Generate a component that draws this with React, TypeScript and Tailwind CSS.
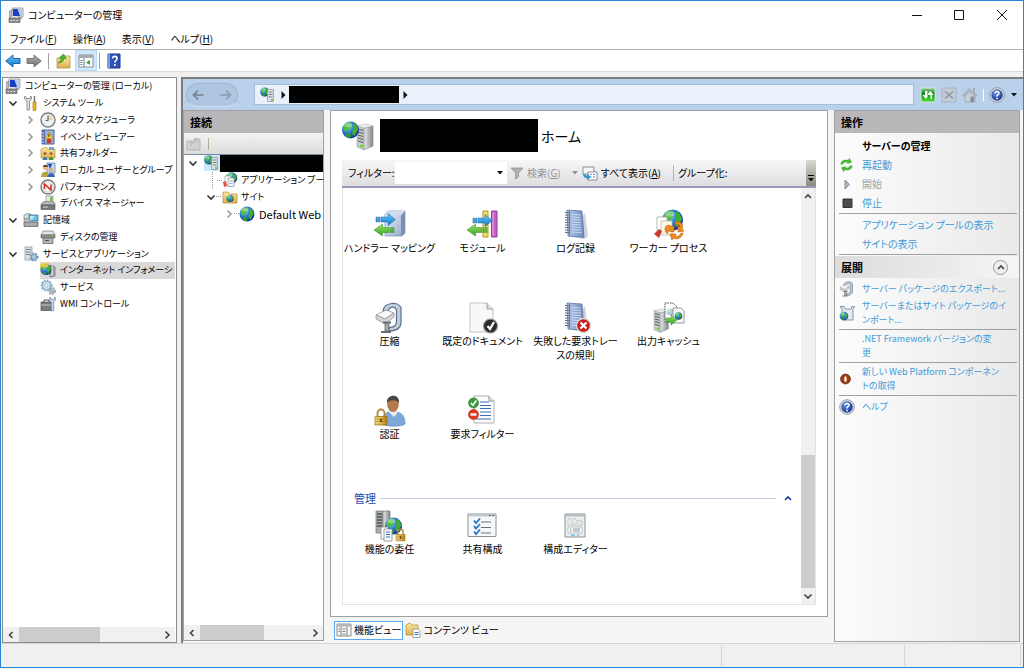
import { ReactNode } from 'react';

/* ---------- drawing primitives ---------- */

const Defs = () => (
  <svg className="absolute h-0 w-0" aria-hidden="true">
    <defs>
      <radialGradient id="sea" cx="35%" cy="30%" r="75%">
        <stop offset="0" stopColor="#9fd4f7" />
        <stop offset="0.45" stopColor="#2f7fd6" />
        <stop offset="1" stopColor="#0b2f86" />
      </radialGradient>
      <linearGradient id="steel" x1="0" x2="1">
        <stop offset="0" stopColor="#e6e9ea" />
        <stop offset="1" stopColor="#85898c" />
      </linearGradient>
      <linearGradient id="book" x1="0" x2="1">
        <stop offset="0" stopColor="#b5c8e6" />
        <stop offset="1" stopColor="#6f8dbf" />
      </linearGradient>
      <linearGradient id="cube" x1="0" x2="1" y2="1">
        <stop offset="0" stopColor="#f2f6fb" />
        <stop offset="1" stopColor="#8fa6c6" />
      </linearGradient>
      <linearGradient id="gold" x1="0" x2="1">
        <stop offset="0" stopColor="#f7dd7c" />
        <stop offset="1" stopColor="#b8841c" />
      </linearGradient>
      <linearGradient id="folder" x1="0" y1="0" x2="0" y2="1">
        <stop offset="0" stopColor="#fbe9a6" />
        <stop offset="1" stopColor="#dcb04e" />
      </linearGradient>
      <linearGradient id="blueArrow" x1="0" y1="0" x2="0" y2="1">
        <stop offset="0" stopColor="#6cc6f4" />
        <stop offset="1" stopColor="#0f78cc" />
      </linearGradient>
      <linearGradient id="greenArrow" x1="0" y1="0" x2="0" y2="1">
        <stop offset="0" stopColor="#9be36b" />
        <stop offset="1" stopColor="#35a322" />
      </linearGradient>
      <linearGradient id="grayArrow" x1="0" y1="0" x2="0" y2="1">
        <stop offset="0" stopColor="#b5b5b5" />
        <stop offset="1" stopColor="#6b6b6b" />
      </linearGradient>
      <linearGradient id="refresh" x1="0" y1="0" x2="0" y2="1">
        <stop offset="0" stopColor="#8ed08a" />
        <stop offset="0.4" stopColor="#128a14" />
        <stop offset="1" stopColor="#4fe03c" />
      </linearGradient>
      <radialGradient id="helpBall" cx="40%" cy="30%" r="70%">
        <stop offset="0" stopColor="#6f95e6" />
        <stop offset="1" stopColor="#16348f" />
      </radialGradient>
    </defs>
  </svg>
);

const Small = ({ children }: { children: ReactNode }) => (
  <svg viewBox="0 0 16 16" className="h-4 w-4 shrink-0" aria-hidden="true">{children}</svg>
);

const Large = ({ children }: { children: ReactNode }) => (
  <svg viewBox="0 0 32 32" className="h-8 w-8 shrink-0" aria-hidden="true">{children}</svg>
);

const Globe = ({ x, y, r }: { x: number; y: number; r: number }) => (
  <g transform={`translate(${x} ${y}) scale(${r / 8})`}>
    <circle r="8" fill="url(#sea)" />
    <path d="M-6.5-3.5C-5-6-2.5-7.3-.5-7.2L1-5.5-.5-4 .5-2.5-2 0-3.5 1.5-5.5.5-6.8-1z" fill="#4fbf3c" />
    <path d="M3-6.5C5.5-5 7-3 7.3-.5L5.5 2 4 5.5 2 4.500 1.500 1.500 3-1 2-3z" fill="#3fae35" />
    <path d="M-4 3.500-1 3 .5 5-.5 7.500C-2.500 7.300-4 6.500-5 5.500z" fill="#2f9a35" />
    <ellipse cx="-2" cy="-4.500" rx="3.500" ry="2" fill="#fff" opacity="0.35" />
  </g>
);

const Tower = ({ x, y, k = 1 }: { x: number; y: number; k?: number }) => (
  <g transform={`translate(${x} ${y}) scale(${k})`}>
    <path d="M0 2 7 4V26L0 23z" fill="#c9cdcf" stroke="#8b8f92" strokeWidth="0.500" />
    <path d="M7 4 16 2V22L7 26z" fill="url(#steel)" stroke="#6e7275" strokeWidth="0.500" />
    <path d="M0 2 9 0 16 2 7 4z" fill="#eceeef" stroke="#999" strokeWidth="0.400" />
    <path d="M1 5 6 6.500M1 8 6 9.500M1 11 6 12.500M1 14 6 15.500M1 17 6 18.500" stroke="#5c6063" strokeWidth="1.200" />
    <circle cx="4.500" cy="22" r="1.500" fill="#64d81e" />
  </g>
);

const Padlock = ({ x, y, k = 1 }: { x: number; y: number; k?: number }) => (
  <g transform={`translate(${x} ${y}) scale(${k})`}>
    <path d="M2.500 8V4.500a3.500 3.500 0 0 1 7 0V8" fill="none" stroke="#b08a38" strokeWidth="1.800" />
    <path d="M0 8H12V16.500H0z" fill="url(#gold)" stroke="#946a12" strokeWidth="0.700" />
    <path d="M1 10.500H11M1 13H11" stroke="#a3761c" strokeWidth="0.600" />
    <path d="M6 10.500v3" stroke="#4c3606" strokeWidth="1.500" />
  </g>
);

const Computer = () => (
  <Small>
    <path d="M1.500 4 4 3V11H1.500z" fill="#bfc4c8" stroke="#777" strokeWidth="0.600" />
    <path d="M4 1H15V10H4z" fill="#dfe6ee" stroke="#7b858f" strokeWidth="0.700" />
    <path d="M5 2H14V9H5z" fill="#b9cdea" />
    <path d="M5 2H9.500L12 9H5z" fill="#1b3fc0" />
    <path d="M11 10H14V12H11z" fill="#aaa" />
    <path d="M1 11H12V15.500H1z" fill="#8a8e91" stroke="#555" strokeWidth="0.600" />
    <path d="M4 11V9.500H8.500V11M2.500 13.500h1.500M5.500 13.500h1.500M8.500 13.500h1.500" stroke="#e8e8e8" fill="none" />
  </Small>
);

const Tools = () => (
  <Small>
    <path d="M2 1 1.500 4 4 6V14a1.300 1.300 0 0 0 2.600 0V6L8.500 4 8 1 6.800 3.500H3.500z" fill="#e4e4e4" stroke="#777" strokeWidth="0.800" />
    <path d="M11.500 1V7" stroke="#777" strokeWidth="1.500" />
    <path d="M10 7H13V14.500a1.500 1.500 0 0 1-3 0z" fill="#f2b41b" stroke="#b67a0a" strokeWidth="0.700" />
  </Small>
);

const Clock = () => (
  <Small>
    <circle cx="8" cy="8" r="7" fill="#eef1f2" stroke="#7b7f82" strokeWidth="1.400" />
    <path d="M8 3A5 5 0 0 1 13 8H8z" fill="#f2d9a0" />
    <path d="M8 3.500V8.500H5.500" stroke="#3e6ea3" strokeWidth="1.200" fill="none" />
  </Small>
);

const EventLog = () => (
  <Small>
    <path d="M2 1H14V15H2z" fill="#9db4d8" stroke="#42639c" />
    <path d="M2 1H5V15H2z" fill="#4f6fa8" />
    <path d="M1 4H4M1 7H4M1 10H4M1 13H4" stroke="#dfe6f2" />
    <path d="M9 3 13 9.500H5.500z" fill="#fbd62f" stroke="#a37a00" strokeWidth="0.500" />
    <path d="M9 5V8" stroke="#222" />
    <circle cx="9" cy="12" r="2.500" fill="#d33a2f" />
  </Small>
);

const SharedFolder = () => (
  <Small>
    <path d="M1 4 6 2 8 4H15V13H1z" fill="url(#folder)" stroke="#b28a2d" strokeWidth="0.600" />
    <path d="M9 2H14V5H9z" fill="#74a7dc" />
    <circle cx="5" cy="8.500" r="1.600" fill="#a36b3a" />
    <circle cx="11" cy="8.500" r="1.600" fill="#a36b3a" />
    <path d="M2.500 15C2.500 11 7.500 11 7.500 15z" fill="#3f75b5" />
    <path d="M8.500 15C8.500 11 13.500 11 13.500 15z" fill="#4a8c44" />
  </Small>
);

const Users = () => (
  <Small>
    <path d="M7 1H15V11H7z" fill="#c5d8ee" stroke="#6685a8" strokeWidth="0.800" />
    <path d="M8 2H12L10 7z" fill="#1742b0" />
    <circle cx="5.500" cy="5.500" r="2.600" fill="#e5b98b" />
    <path d="M2.900 5C3 2 8 2 8 5z" fill="#6b4a2a" />
    <circle cx="11" cy="8" r="2" fill="#d9a878" />
    <path d="M1 15C1 8 9 8 9 15z" fill="#b7a43c" />
    <path d="M7.500 15C7.500 9.500 15 9.500 15 15z" fill="#3c67b1" />
  </Small>
);

const Gauge = () => (
  <Small>
    <circle cx="8" cy="8" r="7" fill="#fff" stroke="#7a7a7a" strokeWidth="1.400" />
    <circle cx="8" cy="8" r="5.300" fill="#f7f1f1" stroke="#bbb" strokeWidth="0.600" />
    <path d="M4.500 10V5L11 11V5.500" stroke="#d5261c" strokeWidth="1.500" fill="none" />
  </Small>
);

const Device = () => (
  <Small>
    <path d="M6 1H13V8H6z" fill="#e5e9ec" stroke="#8b9093" strokeWidth="0.700" />
    <path d="M10 2H12.500V6H10z" fill="#68c33d" />
    <path d="M2 8 4 6.500H13L15 8V10H1z" fill="#b6babd" stroke="#6a6e71" strokeWidth="0.600" />
    <path d="M1 10H15V14.500H1z" fill="#74787b" stroke="#4e5255" strokeWidth="0.600" />
    <path d="M3 12H8" stroke="#d7dadc" />
  </Small>
);

const Storage = () => (
  <Small>
    <path d="M1 3Q4 .5 8 2V7H1z" fill="#d6d9db" stroke="#7d8183" strokeWidth="0.700" />
    <path d="M6 3H15V9H6z" fill="#65bfe6" stroke="#4a7792" strokeWidth="0.800" />
    <path d="M7 4H12L9 8H7z" fill="#b8e6f8" />
    <path d="M1 10H15V14.500H1z" fill="#a7abae" stroke="#55595c" strokeWidth="0.700" />
    <path d="M1 7H7V10H1z" fill="#bfc3c5" stroke="#777" strokeWidth="0.500" />
    <circle cx="12.500" cy="12.300" r="1" fill="#65d62a" />
  </Small>
);

const Disk = () => (
  <Small>
    <path d="M3 2H13L15 6H1z" fill="#e1e4e5" stroke="#777" strokeWidth="0.700" />
    <path d="M1 6H15V9H1z" fill="#909497" stroke="#55595c" strokeWidth="0.600" />
    <path d="M3 9H13V14.500H3z" fill="#b5b9bb" stroke="#55595c" strokeWidth="0.700" />
    <path d="M5 11.500H9" stroke="#555" strokeWidth="1.200" />
    <circle cx="12.500" cy="7.500" r="1" fill="#65d62a" />
  </Small>
);

const Cog = ({ x, y, r, fill }: { x: number; y: number; r: number; fill: string }) => (
  <g>
    <circle cx={x} cy={y} r={r} fill="none" stroke={fill} strokeWidth="2" strokeDasharray="1.700 1.200" />
    <circle cx={x} cy={y} r={r - 1} fill="#dcebf5" stroke={fill} strokeWidth="1.200" />
    <circle cx={x} cy={y} r={r / 3} fill="#fff" stroke={fill} strokeWidth="0.800" />
  </g>
);

const ServerCog = () => (
  <Small>
    <path d="M2 1H9V14H2z" fill="#dde1e4" stroke="#8b9093" strokeWidth="0.700" />
    <path d="M3 3.500H8M3 6H8M3 8.500H7" stroke="#7b8084" />
    <Cog x={11} y={11} r={3.500} fill="#7199bd" />
  </Small>
);

const Services = () => (
  <Small>
    <Cog x={6.500} y={6.500} r={5} fill="#82adc9" />
    <Cog x={12} y={12} r={3} fill="#94a5b1" />
  </Small>
);

const IisNode = () => (
  <Small>
    <path d="M10 3 15 5V14L10 15z" fill="#a7abad" stroke="#66696c" strokeWidth="0.700" />
    <path d="M12 4V14" stroke="#eee" />
    <Globe x={6} y={7.500} r={5.500} />
    <path d="M0 3C2 0 5 2 9 .5L8 5C5 6 3 4 0 6z" fill="#f2c92f" opacity="0.850" />
  </Small>
);

const Wmi = () => (
  <Small>
    <path d="M4 6V4H9V6" stroke="#555" fill="none" />
    <path d="M1 6H12V14.500H1z" fill="#777c80" stroke="#4b4f52" strokeWidth="0.700" />
    <path d="M1 9H12" stroke="#c5c8ca" />
    <path d="M10 1 9.500 4 11.300 6V14a1.200 1.200 0 0 0 2.400 0V6L15.500 4 15 1 13.500 3.500H11.500z" fill="#c9def1" stroke="#5c7da1" strokeWidth="0.700" />
  </Small>
);

const GlobeServer = () => (
  <Small>
    <Globe x={4.800} y={5} r={4.600} />
    <path d="M7.500 2.500H13.500V14.500H7.500z" fill="#dfe3e6" stroke="#8b9093" strokeWidth="0.700" />
    <path d="M8.500 5H12.500M8.500 7.500H12.500M8.500 10H12.500" stroke="#7b8084" />
    <circle cx="12" cy="13" r="1" fill="#4fc41f" />
  </Small>
);

const AppPools = () => (
  <Small>
    <Globe x={9.500} y={6} r={5.800} />
    <path d="M3 4H9V13H3z" fill="#fff" stroke="#999" strokeWidth="0.700" />
    <path d="M6 6H12V14.500H6z" fill="#f1f5f8" stroke="#8b8f92" strokeWidth="0.700" />
    <path d="M1 10 4 9 5 14 2 15z" fill="#d9534a" />
    <path d="M7.500 9H10.500M7.500 11.500H10.500" stroke="#9cb3cc" />
  </Small>
);

const SitesFolder = () => (
  <Small>
    <path d="M1 3H6L8 5H15V14H1z" fill="url(#folder)" stroke="#b28a2d" strokeWidth="0.700" />
    <Globe x={8} y={9.500} r={3.600} />
  </Small>
);

const Site = () => <Small><Globe x={8} y={8} r={7.500} /></Small>;

const HelpBall = () => (
  <Small>
    <circle cx="8" cy="8" r="7.300" fill="#dcdfe4" stroke="#868b96" strokeWidth="0.800" />
    <circle cx="8" cy="8" r="5.700" fill="url(#helpBall)" />
    <path d="M6 6.300C6 3.800 10.200 3.900 10 6.300 9.900 7.700 8 7.700 8 9.400" fill="none" stroke="#fff" strokeWidth="1.500" />
    <circle cx="8" cy="11.500" r="0.900" fill="#fff" />
  </Small>
);

const Chevron = ({ dir, color = '#444' }: { dir: 'up' | 'down' | 'left' | 'right'; color?: string }) => {
  const d = {
    up: 'M2 7 5 4 8 7',
    down: 'M1.500 3.500 5 7 8.500 3.500',
    left: 'M6.500 2 3.500 5 6.500 8',
    right: 'M3.500 1.500 7 5 3.500 8.500',
  }[dir];
  return (
    <svg viewBox="0 0 10 10" className="h-[10px] w-[10px] shrink-0" aria-hidden="true">
      <path d={d} fill="none" stroke={color} strokeWidth="1.600" />
    </svg>
  );
};

const Caret = ({ color = '#111' }: { color?: string }) => (
  <svg viewBox="0 0 6 4" className="h-1 w-[6px] shrink-0" aria-hidden="true"><path d="M0 0H6L3 3.500z" fill={color} /></svg>
);

const RightCaret = () => (
  <svg viewBox="0 0 5 8" className="h-2 w-[5px] shrink-0" aria-hidden="true"><path d="M.5 0 4.500 4 .5 8z" fill="#111" /></svg>
);

/* ---------- large feature icons ---------- */

const BlueArrow = () => (
  <path d="M2 8H3.500V13H2zM4.500 8H6V13H4.500zM7 8H14V4.500L21.500 10.500 14 16.500V13H7z" fill="url(#blueArrow)" stroke="#1b69ad" strokeWidth="0.500" />
);

const GreenArrow = () => (
  <path d="M20 18.500H18.500V23.500H20zM17.500 18.500H16V23.500H17.500zM15 18.500H8.500V15L0 21 8.500 27V23.500H15z" fill="url(#greenArrow)" stroke="#2f8a20" strokeWidth="0.500" />
);

const HandlerIcon = () => (
  <Large>
    <path d="M11 5 14 2H31V24L28 27H11z" fill="url(#cube)" stroke="#7c93b4" strokeWidth="0.700" />
    <path d="M27 6 31 2V24L27 27z" fill="#7890b5" />
    <path d="M11 5 14 2H31L27 6H11z" fill="#cfdced" />
    <BlueArrow />
    <GreenArrow />
  </Large>
);

const ModuleIcon = () => (
  <Large>
    <path d="M16 2H21V28H16z" fill="#f7e06a" stroke="#b39226" />
    <path d="M24.500 2H30V28H24.500z" fill="#c45fc4" stroke="#8d3a92" />
    <path d="M26 3V27" stroke="#eab0ea" />
    <g transform="translate(4 1)"><BlueArrow /></g>
    <GreenArrow />
  </Large>
);

const Notebook = () => (
  <g>
    <path d="M8 27 25 30 28 27 25 4z" fill="#cfd3da" />
    <path d="M7 1 22 2 24 28.500 8 27z" fill="url(#book)" stroke="#4d6a9e" strokeWidth="0.700" />
    <path d="M9.500 2V26.500" stroke="#5876aa" />
    <path d="M12 5.500 20.500 6M12 8 20.500 8.500M12 10.500 20.800 11M12 13 21 13.500M12 15.500 21 16M12 18 21.300 18.500M12 20.500 21.500 21M12 23 21.700 23.500" stroke="#dbe6f6" strokeWidth="0.800" />
    <path d="M5 3.500H9M5 6H9M5 8.500H9M5 11H9M5 13.500H9M5 16H9M5 18.500H9M5 21H9M5 23.500H9" stroke="#5d6f8d" strokeWidth="1" />
  </g>
);

const LogIcon = () => <Large><Notebook /></Large>;

const FailedTraceIcon = () => (
  <Large>
    <Notebook />
    <circle cx="23.500" cy="23.500" r="7" fill="#c81e1e" stroke="#ddd" strokeWidth="1.300" />
    <path d="M20.500 20.500 26.500 26.500M26.500 20.500 20.500 26.500" stroke="#fff" strokeWidth="2.300" />
  </Large>
);

const WorkerIcon = () => (
  <Large>
    <Globe x={19.500} y={11} r={10.500} />
    <path d="M4 8H14V22H4z" fill="#fff" stroke="#aaa" strokeWidth="0.800" />
    <path d="M8 12H19V26H8z" fill="#fdf6e4" stroke="#bba" strokeWidth="0.800" />
    <path d="M1 25 6 20 9 22 6 29z" fill="#cd3a32" />
    <path d="M12 20C12 16 17 15 19 18L21 16 21 23 15 22 17 20C15 19 14 21 15 25 13 24 12 22 12 20z" fill="#f28a1d" stroke="#b75c08" strokeWidth="0.600" />
    <path d="M23 13C28 12 31 16 29 20L31 22 25 23 25 17 27 18C27 16 25 15 22 16z" fill="#f28a1d" stroke="#b75c08" strokeWidth="0.600" />
    <path d="M30 24C29 29 24 31 20 29L19 31 17 25 23 25 22 27C24 28 27 27 28 24z" fill="#f28a1d" stroke="#b75c08" strokeWidth="0.600" />
  </Large>
);

const ClampShape = () => (
  <g>
    <path d="M9 9C10 0 25-1 27 6V20C27 27 22 29 15 29V25.500C20 25.500 22.500 24 22.500 19V9C22 4 16 3.500 14 9z" fill="#c3cedb" stroke="#5a6f8d" strokeWidth="1.200" />
    <path d="M2 13 12 8 20 11 11 17z" fill="#fafafa" stroke="#888" strokeWidth="0.700" />
    <path d="M2 13V17L11 22 20 15V11L11 17z" fill="#d5d8da" stroke="#888" strokeWidth="0.700" />
    <path d="M11 21H15V29H11z" fill="#a3a9b0" stroke="#555" strokeWidth="0.700" />
    <path d="M7 30H17M9 20.500H17" stroke="#666d75" strokeWidth="1.800" />
  </g>
);

const CompressIcon = () => <Large><ClampShape /></Large>;

const DefaultDocIcon = () => (
  <Large>
    <path d="M3 1H20L26 7V30H3z" fill="#f8f8f8" stroke="#c0c3c5" />
    <path d="M20 1V7H26" fill="#e0e2e3" stroke="#9b9ea0" />
    <circle cx="23.500" cy="24" r="7" fill="#2a2a2a" stroke="#999" strokeWidth="1.200" />
    <path d="M20.500 24 23 27 27 20" fill="none" stroke="#fff" strokeWidth="2.200" />
  </Large>
);

const CacheIcon = () => (
  <Large>
    <Tower x={1} y={7} k={0.900} />
    <path d="M12 1H20L24 5V20H12z" fill="#fff" stroke="#333" strokeDasharray="1.500 1" strokeWidth="0.900" />
    <g opacity="0.400"><Globe x={17} y={10} r={3.300} /></g>
    <path d="M20 6H28L31 9V21H20z" fill="#f7fafc" stroke="#8b8f92" strokeWidth="0.900" />
    <Globe x={25.500} y={14} r={3.800} />
    <path d="M13 16H18V13L24 18 18 23V20H13z" fill="url(#greenArrow)" stroke="#2f8a20" strokeWidth="0.500" />
  </Large>
);

const AuthIcon = () => (
  <Large>
    <path d="M8 29C8 18 13 17 19 16 26 17 31 19 31 29 27 32 13 32 8 29z" fill="#7da9da" stroke="#5482b7" strokeWidth="0.600" />
    <path d="M15 17 20 22 24 17 22 14H16z" fill="#e9eef4" />
    <ellipse cx="19" cy="9.500" rx="5.800" ry="7.500" fill="#b07a4a" />
    <path d="M13 8C12-1 26-2 25 8 23 5 17 4 13 8z" fill="#4b4643" />
    <Padlock x={1} y={13.500} />
  </Large>
);

const RequestFilterIcon = () => (
  <Large>
    <path d="M7 1H22L27 6V28H7z" fill="#fbfbfb" stroke="#aeb1b3" />
    <path d="M22 1V6H27" fill="#e1e3e4" stroke="#999" />
    <path d="M13 7H22M13 10.500H24M13 13.500H24M13 17H24M13 20.500H24M9 24H24" stroke="#3c6fb9" strokeWidth="1.200" />
    <circle cx="6.500" cy="8" r="5" fill="#3b9c3e" stroke="#26712b" strokeWidth="0.600" />
    <path d="M4 8 6 10.200 9.300 5.500" stroke="#fff" strokeWidth="1.600" fill="none" />
    <circle cx="6.500" cy="19.500" r="5" fill="#de3a1e" stroke="#a7220d" strokeWidth="0.600" />
    <path d="M3.500 19.500H9.500" stroke="#fff" strokeWidth="2.400" />
  </Large>
);

const DelegationIcon = () => (
  <Large>
    <path d="M2 1H9V23H2z" fill="#a9adb0" stroke="#6e7275" strokeWidth="0.700" />
    <path d="M9 1H16V21L9 23z" fill="url(#steel)" stroke="#6e7275" strokeWidth="0.700" />
    <path d="M3 4H8M3 7H8M3 10H8M3 13H8M3 16H8" stroke="#4f5356" strokeWidth="1.300" />
    <Globe x={19.500} y={16} r={8.500} />
    <path d="M7 17H14V29H7z" fill="#fff" stroke="#888" strokeWidth="0.800" />
    <path d="M10 19H18V31H10z" fill="#f7fafc" stroke="#888" strokeWidth="0.800" />
    <path d="M12 22H16M12 24.500H16M12 27H16" stroke="#3c6fb9" />
    <Padlock x={22} y={18.500} k={0.750} />
  </Large>
);

const SharedConfigIcon = () => (
  <Large>
    <path d="M1 4H29V26.500H1z" fill="#f6f8f9" stroke="#8b9196" />
    <path d="M1.500 4.500H28.500V6.500H1.500z" fill="#c3c9cd" />
    <path d="M22 5.500H23.500M25.500 5.500H27" stroke="#444" />
    <path d="M7 10.500 9 13 13 8.500M7 16 9 18.500 13 14M7 21.500 9 24 13 19.500" stroke="#2477c4" strokeWidth="1.800" fill="none" />
    <path d="M14 12H24M14 17.500H24M14 23H24" stroke="#6b7176" strokeWidth="1.200" />
  </Large>
);

const ConfigEditorIcon = () => (
  <Large>
    <path d="M5 4H25V27H5z" fill="#eceff0" stroke="#8b9196" />
    <path d="M5.500 4.500H24.500V6.500H5.500z" fill="#b6bcc0" />
    <path d="M8 9H16V11H22V15H8zM8 17H22V23H8z" fill="#f8f9f9" stroke="#a9afb3" strokeWidth="0.700" />
    <path d="M10 13H20M10 11H14" stroke="#b4babe" strokeWidth="0.800" />
    <path d="M10 19H11.500M13 19H20M10 21H11.500M13 21H20" stroke="#6c8094" strokeWidth="0.800" />
    <path d="M11 25.200H15M17 25.200H19" stroke="#56b8e8" strokeWidth="1.300" />
  </Large>
);

/* ---------- data ---------- */

type Node = { level: number; label: string; icon: ReactNode; open?: boolean; selected?: boolean };

const managementTree: Node[] = [
  { level: 0, label: 'コンピューターの管理 (ローカル)', icon: <Computer /> },
  { level: 1, label: 'システム ツール', icon: <Tools />, open: true },
  { level: 2, label: 'タスク スケジューラ', icon: <Clock />, open: false },
  { level: 2, label: 'イベント ビューアー', icon: <EventLog />, open: false },
  { level: 2, label: '共有フォルダー', icon: <SharedFolder />, open: false },
  { level: 2, label: 'ローカル ユーザーとグループ', icon: <Users />, open: false },
  { level: 2, label: 'パフォーマンス', icon: <Gauge />, open: false },
  { level: 2, label: 'デバイス マネージャー', icon: <Device /> },
  { level: 1, label: '記憶域', icon: <Storage />, open: true },
  { level: 2, label: 'ディスクの管理', icon: <Disk /> },
  { level: 1, label: 'サービスとアプリケーション', icon: <ServerCog />, open: true },
  { level: 2, label: 'インターネット インフォメーシ', icon: <IisNode />, selected: true },
  { level: 2, label: 'サービス', icon: <Services /> },
  { level: 2, label: 'WMI コントロール', icon: <Wmi /> },
];

const features = [
  { label: 'ハンドラー マッピング', icon: <HandlerIcon /> },
  { label: 'モジュール', icon: <ModuleIcon /> },
  { label: 'ログ記録', icon: <LogIcon /> },
  { label: 'ワーカー プロセス', icon: <WorkerIcon /> },
  { label: '圧縮', icon: <CompressIcon /> },
  { label: '既定のドキュメント', icon: <DefaultDocIcon /> },
  { label: '失敗した要求トレー\nスの規則', icon: <FailedTraceIcon /> },
  { label: '出力キャッシュ', icon: <CacheIcon /> },
  { label: '認証', icon: <AuthIcon /> },
  { label: '要求フィルター', icon: <RequestFilterIcon /> },
];

const managementFeatures = [
  { label: '機能の委任', icon: <DelegationIcon /> },
  { label: '共有構成', icon: <SharedConfigIcon /> },
  { label: '構成エディター', icon: <ConfigEditorIcon /> },
];

const menus = [
  ['ファイル', 'F'],
  ['操作', 'A'],
  ['表示', 'V'],
  ['ヘルプ', 'H'],
];

/* ---------- pieces ---------- */

const Key = ({ k }: { k: string }) => <>(<span className="underline">{k}</span>)</>;

const indent = ['pl-0', 'pl-0', 'pl-[17px]'];

const TreeRow = ({ level, label, icon, open, selected }: Node) => (
  <li className={`flex min-h-0 flex-1 items-center ${indent[level]}`}>
    {level > 0 && (
      <span className="flex w-[18px] shrink-0 pl-[3px]">
        {open !== undefined && <Chevron dir={open ? 'down' : 'right'} color={open ? '#333' : '#999'} />}
      </span>
    )}
    <span className={`flex h-full items-center gap-1 ${selected ? 'flex-1 bg-[#d9d9d9]' : ''}`}>
      {icon}
      <span>{label}</span>
    </span>
  </li>
);

const HScroll = ({ thumb }: { thumb: string }) => (
  <div className="flex h-[15px] shrink-0 items-stretch bg-[#f0f0f0]">
    <button aria-label="左へスクロール" className="flex w-4 items-center justify-center"><Chevron dir="left" /></button>
    <div className="flex-1"><div className={`h-full bg-[#cdcdcd] ${thumb}`} /></div>
    <button aria-label="右へスクロール" className="flex w-4 items-center justify-center"><Chevron dir="right" /></button>
  </div>
);

const PaneTitle = ({ children }: { children: ReactNode }) => (
  <h2 className="flex h-[22px] shrink-0 items-center bg-[#bab7ba] px-[6px] text-[11px] font-bold">{children}</h2>
);

const FeatureGrid = ({ items }: { items: { label: string; icon: ReactNode }[] }) => (
  <ul className="grid auto-rows-[93px] grid-cols-[repeat(auto-fill,93px)]">
    {items.map(f => (
      <li key={f.label}>
        <button className="flex w-full flex-col items-center">
          {f.icon}
          <span className="whitespace-pre text-center leading-[14px]">{f.label}</span>
        </button>
      </li>
    ))}
  </ul>
);

const Action = ({ icon, label, tall }: { icon?: ReactNode; label: string; tall?: boolean }) => (
  <li className={`flex items-center ${tall ? 'h-[30px]' : 'h-[19px]'}`}>
    <span className="flex w-[27px] shrink-0 items-center pl-1">{icon}</span>
    <a href="#" className="whitespace-pre leading-[14px] text-[#3d9bd8]">{label}</a>
  </li>
);

const Rule = () => <li className="mr-[2px] ml-1 my-[1px] h-[1px] bg-[#a0a0a0]" />;

const App = () => {
  return (
    <div className="flex min-h-screen flex-col border border-[#2a85d4] bg-white font-['Noto_Sans_CJK_JP',sans-serif] text-[10px] leading-[16px] text-black [font-feature-settings:'palt']">
      <Defs />

      {/* Title bar */}
      <header className="flex h-[27px] items-center pl-[7px]">
        <Computer />
        <h1 className="flex-1 pl-1">コンピューターの管理</h1>
        <button aria-label="最小化" className="flex w-[42px] justify-center">
          <svg viewBox="0 0 10 10" className="h-[10px] w-[10px]"><path d="M0 5.500H10" stroke="#111" /></svg>
        </button>
        <button aria-label="最大化" className="flex w-[42px] justify-center">
          <svg viewBox="0 0 10 10" className="h-[10px] w-[10px]"><path d="M.5.5H9.500V9.500H.5z" fill="none" stroke="#111" /></svg>
        </button>
        <button aria-label="閉じる" className="flex w-[43px] justify-center">
          <svg viewBox="0 0 10 10" className="h-[10px] w-[10px]"><path d="M0 0 10 10M10 0 0 10" stroke="#111" /></svg>
        </button>
      </header>

      {/* Menu bar */}
      <nav className="flex h-[22px] items-center gap-4 border-b border-[#b4b4b4] pl-[9px]">
        {menus.map(([label, k]) => (
          <button key={k}>{label}<Key k={k} /></button>
        ))}
      </nav>

      {/* Toolbar */}
      <div className="flex h-[21px] items-center pl-1">
        <button aria-label="戻る" className="mr-[5px]">
          <Small><path d="M8 2V5.500H15V10.500H8V14L.8 8z" fill="url(#blueArrow)" stroke="#1b69ad" /></Small>
        </button>
        <button aria-label="進む">
          <Small><path d="M8 2V5.500H1V10.500H8V14L15.200 8z" fill="url(#grayArrow)" stroke="#777" /></Small>
        </button>
        <span className="mx-[6px] h-4 w-[1px] bg-[#a0a0a0]" />
        <button aria-label="上へ" className="mr-1">
          <Small>
            <path d="M2 5H8L9 3H15V15H2z" fill="url(#folder)" stroke="#b28a2d" strokeWidth="0.700" />
            <path d="M3 10C4 9 6 8 6.500 5.500L4 5 8.500 1 11.500 5.500 9 5.500C8.500 8.500 6 10 3 10z" fill="#49b82e" stroke="#2b7d18" strokeWidth="0.500" />
          </Small>
        </button>
        <button aria-label="コンソール ツリーの表示" className="flex h-[21px] w-[22px] items-center justify-center border border-[#b5dcf8] bg-[#cfe8fb]">
          <Small>
            <path d="M1 2H15V14H1z" fill="#fff" stroke="#8a8f94" />
            <path d="M1 2H15V5H1z" fill="#a5abb1" />
            <path d="M6 5V14M2.500 7.500H4.500M2.500 9.500H4.500M2.500 11.500H4.500" stroke="#6c7c8c" />
            <path d="M12 7V12L8 9.500z" fill="#38a52c" />
          </Small>
        </button>
        <span className="mx-[2px] h-4 w-[1px] bg-[#a0a0a0]" />
        <button aria-label="ヘルプ" className="ml-1">
          <Small>
            <path d="M2 1H14V15H2z" fill="#2e55b5" stroke="#1b3787" />
            <path d="M2 1H4V15H2z" fill="#7c9be0" />
            <path d="M6.500 5.500C6.500 2.600 11 2.800 11 5.500 11 7.500 8.800 7.500 8.800 9.500M8.800 11V13" stroke="#fff" strokeWidth="1.600" fill="none" />
          </Small>
        </button>
      </div>
      <div className="h-[6px] border-t border-[#d9d9d9] bg-[#f0f0f0]" />

      <main className="flex min-h-0 flex-1 gap-1 bg-[#f0f0f0] pl-[1px]">
        {/* Console tree */}
        <aside className="flex w-[175px] shrink-0 flex-col border border-[#8c8c8c] bg-white pr-[1px]">
          <ul className="flex h-[234px] flex-col pl-[2px] text-[9px] whitespace-nowrap">
            {managementTree.map(n => <TreeRow key={n.label} {...n} />)}
          </ul>
          <div className="flex-1" />
          <HScroll thumb="w-[58%]" />
        </aside>

        {/* IIS manager */}
        <section className="flex min-w-0 flex-1 flex-col border-t-2 border-l-2 border-[#7d7d7d] bg-[#f5f5f5]">
          <div className="flex h-[31px] shrink-0 items-center bg-[#b9d1ea] pr-[6px] pl-[3px]">
            <div className="flex h-6 w-[52px] items-center justify-between rounded-full border border-[#9db5d1] border-b-[#cfdff0] bg-[#aec6e1] px-[5px]">
              <button aria-label="前のページ">
                <svg viewBox="0 0 12 12" className="h-3 w-3"><path d="M11.500 6H1.500M6 1.500 1.500 6 6 10.500" stroke="#76828f" strokeWidth="1.700" fill="none" /></svg>
              </button>
              <button aria-label="次のページ">
                <svg viewBox="0 0 12 12" className="h-3 w-3"><path d="M.5 6H10.500M6 1.500 10.500 6 6 10.500" stroke="#8b9bad" strokeWidth="1.700" fill="none" /></svg>
              </button>
            </div>
            <div className="ml-4 flex h-[21px] flex-1 items-center border border-[#a5bfdb] bg-[#e9f1fa] pl-[5px]">
              <GlobeServer />
              <span className="pr-[3px] pl-[5px]"><RightCaret /></span>
              <div className="h-[17px] w-[110px] bg-black" />
              <span className="pl-1"><RightCaret /></span>
            </div>
            <div className="flex items-center gap-[5px] pl-[6px]">
              <button aria-label="更新">
                <Small>
                  <path d="M1 1H15V15H1z" fill="url(#refresh)" stroke="#d5e3d5" />
                  <path d="M5 4V8H2.500L6 12 7.500 10V4zM10.500 12V8H8V6.500L10.500 4 13.500 8H12V12z" fill="#fff" />
                </Small>
              </button>
              <button aria-label="中止">
                <Small>
                  <path d="M1 1H15V15H1z" fill="#c3cdd8" stroke="#a9b3be" />
                  <path d="M4 4.500 12 11.500M12 4.500 4 11.500" stroke="#8c97a3" strokeWidth="1.500" />
                </Small>
              </button>
              <button aria-label="ホーム">
                <Small>
                  <path d="M3 8 8 4 13 8V15H3z" fill="#c7ced6" stroke="#98a1ab" strokeWidth="0.800" />
                  <path d="M11 1H13V6H11z" fill="#a3abb4" />
                  <path d="M.5 8.500 7 1.500 15 8.500 13 9.500 7.500 4.500 2 9.500z" fill="#b3bbc4" stroke="#949da6" strokeWidth="0.600" />
                  <path d="M8.500 9.500H12V15H8.500z" fill="#848d97" />
                </Small>
              </button>
              <span className="h-3 w-[1px] bg-white" />
              <button aria-label="ヘルプ メニュー" className="flex items-center gap-[6px]">
                <HelpBall />
                <Caret />
              </button>
            </div>
          </div>

          <div className="flex min-h-0 flex-1 gap-[6px] pr-[3px]">
            {/* Connections */}
            <div className="mb-[2px] flex w-[141px] shrink-0 flex-col border border-[#a0a0a0] bg-white">
              <PaneTitle>接続</PaneTitle>
              <div className="flex h-[22px] items-center border-b border-[#7a8a9c] bg-linear-to-b from-[#f3f3f3] to-[#dcdcdc] pl-[2px]">
                <button aria-label="接続先" disabled>
                  <Small><path d="M1 5H6L4 8 9 3H14V14H1zM4 10 11 3M7.500 3H11V6.500" fill="#d2d2d2" stroke="#b5b5b5" /></Small>
                </button>
                <span className="ml-[6px] h-3 w-[1px] bg-[#b5b09a]" />
              </div>
              <ul className="flex h-[67px] flex-col text-[9px] whitespace-nowrap">
                <li className="flex flex-1 items-center pl-1">
                  <Chevron dir="down" color="#333" />
                  <span className="w-[6px] shrink-0" />
                  <span className="bg-[#cce8ff]"><GlobeServer /></span>
                  <span className="h-full flex-1 bg-black" />
                </li>
                <li className="flex flex-1 items-center pl-[28px]">
                  <span className="h-full w-[5px] shrink-0 border-l border-dotted border-[#999]" />
                  <span className="w-[5px] shrink-0 border-t border-dotted border-[#999]" />
                  <AppPools />
                  <span className="pl-[3px]">アプリケーション プー</span>
                </li>
                <li className="flex flex-1 items-center pl-[22px]">
                  <Chevron dir="down" color="#333" />
                  <span className="mr-[1px] w-[5px] border-t border-dotted border-[#999]" />
                  <SitesFolder />
                  <span className="pl-[3px]">サイト</span>
                </li>
                <li className="flex flex-1 items-center pl-10">
                  <Chevron dir="right" color="#999" />
                  <span className="w-[5px] shrink-0 border-t border-dotted border-[#999]" />
                  <Site />
                  <span className="pl-1 text-[11px]">Default Web</span>
                </li>
              </ul>
              <div className="flex-1" />
              <HScroll thumb="w-[60%]" />
            </div>

            {/* Feature view */}
            <div className="flex min-w-0 flex-1 flex-col">
              <div className="flex flex-1 flex-col border border-[#a0a0a0] bg-white pr-[11px] pb-[11px] pl-[11px]">
                <div className="flex h-[49px] items-center">
                  <Large>
                    <Tower x={15} y={4} />
                    <Globe x={8.500} y={10} r={8.500} />
                  </Large>
                  <div className="ml-[6px] h-[33px] w-[158px] bg-black" />
                  <h2 className="pl-[3px] text-[14px]">ホーム</h2>
                </div>
                <div className="flex h-7 shrink-0 items-center border-b-2 border-[#9a98b2] bg-linear-to-b from-[#f7f7f8] to-[#dedde0] pl-[6px] whitespace-nowrap">
                  <label htmlFor="filter" className="w-[47px]">フィルター:</label>
                  <div className="flex h-[22px] w-[112px] items-center bg-white pr-1">
                    <input id="filter" type="text" className="h-full min-w-0 flex-1 bg-white px-1 outline-none" />
                    <button aria-label="フィルター履歴"><Caret /></button>
                  </div>
                  <button disabled className="flex items-center gap-[2px] pl-[2px] text-[#929292]">
                    <Small><path d="M2 3H14L9.500 8V12L6.500 14V8z" fill="#b0b0b0" stroke="#999" strokeWidth="0.800" /></Small>
                    <span>検索<Key k="G" /></span>
                    <span className="pl-[9px]"><Caret color="#929292" /></span>
                  </button>
                  <button className="flex items-center gap-[3px] pl-1">
                    <Small>
                      <path d="M1 2H12V9H1z" fill="#f5f7f9" stroke="#8a9097" />
                      <path d="M6 7H15V15H6z" fill="#fff" stroke="#8a9097" />
                      <path d="M8 9.500H9.500M11 9.500H13M8 12H9.500M11 12H13" stroke="#4a7fc0" strokeWidth="1.200" />
                      <path d="M1 9C1 12 3 13 5 13V15L9 12 5 9V10.500C4 10.500 3 10 3 9z" fill="#2b95dc" />
                    </Small>
                    <span>すべて表示<Key k="A" /></span>
                  </button>
                  <span className="mr-1 ml-3 h-4 w-[1px] bg-[#b0b0b0]" />
                  <span className="flex-1">グループ化:</span>
                  <button aria-label="ツール バー オプション" className="flex h-full w-[10px] flex-col items-center justify-end gap-[2px] bg-linear-to-b from-[#dad9d3] to-[#8c8b82] pb-1">
                    <span className="h-[1px] w-[6px] bg-black" />
                    <Caret />
                  </button>
                </div>
                <div className="flex flex-1 border border-t-0 border-[#e3e3e3]">
                  <div className="min-w-0 flex-1 pt-[21px]">
                    <FeatureGrid items={features} />
                    <div className="mt-[2px] mb-1 flex h-[16px] items-center pr-2 pl-[11px] text-[11px] text-[#1e4aa8]">
                      <h3>管理</h3>
                      <span className="mr-[7px] ml-1 h-[1px] flex-1 bg-[#c3cbe8]" />
                      <Chevron dir="up" color="#153e9b" />
                    </div>
                    <FeatureGrid items={managementFeatures} />
                  </div>
                  <div className="flex w-[14px] shrink-0 flex-col bg-[#f0f0f0]">
                    <button aria-label="上へスクロール" className="flex h-4 items-center justify-center"><Chevron dir="up" /></button>
                    <div className="flex-[251]" />
                    <div className="flex-[133] bg-[#cdcdcd]" />
                    <button aria-label="下へスクロール" className="flex h-4 items-center justify-center"><Chevron dir="down" /></button>
                  </div>
                </div>
              </div>
              <div className="flex h-[26px] shrink-0 items-center gap-[2px] pl-1">
                <button className="flex h-[19px] items-center gap-[2px] border border-[#5aa9f5] bg-white px-[1px]">
                  <Small>
                    <path d="M1 2H15V14H1z" fill="#f5f5f5" stroke="#8b8b8b" />
                    <path d="M1 2H15V4.500H1z" fill="#b5b5b5" />
                    <path d="M5 4.500V14M11 4.500V14M2.500 7H4M6.500 7H9.500M6.500 9.500H9.500M2.500 9.500H4M6.500 12H9.500" stroke="#808080" />
                  </Small>
                  機能ビュー
                </button>
                <button className="flex h-[19px] items-center gap-[2px]">
                  <Small>
                    <path d="M1 3 5 1 7 3H13V13H1z" fill="url(#folder)" stroke="#b28a2d" strokeWidth="0.700" />
                    <path d="M8 7H13L15 9V15.500H8z" fill="#fff" stroke="#8b8f92" strokeWidth="0.800" />
                    <path d="M9.500 10.500H13.500M9.500 12.500H13.500" stroke="#3c6fb9" />
                  </Small>
                  コンテンツ ビュー
                </button>
              </div>
            </div>

            {/* Actions */}
            <div className="mb-[1px] w-[186px] shrink-0 border border-[#a0a0a0] bg-linear-to-r from-[#fcfcfc] to-[#e9e9e9] whitespace-nowrap">
              <PaneTitle>操作</PaneTitle>
              <ul className="pt-1">
                <li className="h-[18px] pl-[27px] leading-[18px] font-bold">サーバーの管理</li>
                <Action
                  label="再起動"
                  icon={
                    <Small>
                      <path d="M1.500 7.500C1.500 4 5 2 9 3L10.500 1 13 5.500 7.500 7 8.500 5.500C6 5 4.500 6 4 7.500z" fill="#4cb838" />
                      <path d="M13.500 8.500C13.500 12 10 14 6 13L4.500 15 2 10.500 7.500 9 6.500 10.500C9 11 10.500 10 11 8.500z" fill="#4cb838" />
                    </Small>
                  }
                />
                <li className="flex h-[19px] items-center text-[#a0a0a0]">
                  <span className="flex w-[27px] shrink-0 pl-1">
                    <Small><path d="M6 4 10.500 8.500 6 13z" fill="#b5b5b5" stroke="#8c8c8c" /></Small>
                  </span>
                  開始
                </li>
                <Action label="停止" icon={<Small><path d="M4 4H13V12.500H4z" fill="#4c4c4c" stroke="#333" /></Small>} />
                <Rule />
                <Action label="アプリケーション プールの表示" />
                <Action label="サイトの表示" />
                <Rule />
              </ul>
              <h3 className="my-[1px] flex h-[22px] items-center justify-between bg-linear-to-r from-[#dcdcdc] to-[#f5f5f5] pr-[11px] pl-[6px] text-[11px] font-bold">
                展開
                <button aria-label="折りたたむ" className="flex h-[15px] w-[15px] items-center justify-center rounded-full border border-[#999] bg-[#f0f0f0]">
                  <Chevron dir="up" />
                </button>
              </h3>
              <ul className="text-[9px]">
                <Action label="サーバー パッケージのエクスポート..." icon={<svg viewBox="0 0 32 32" className="h-4 w-4"><ClampShape /></svg>} />
                <Action
                  tall
                  label={'サーバーまたはサイト パッケージのイ\nンポート...'}
                  icon={
                    <Small>
                      <path d="M3 4 1 1.500H5L6 4H12L13 1.500H15.500L14 4V15H3z" fill="#e5e9f1" stroke="#6b7ba0" strokeWidth="0.800" />
                      <Globe x={5} y={11} r={4.300} />
                    </Small>
                  }
                />
                <Rule />
                <Action tall label={'.NET Framework バージョンの変\n更'} />
                <Rule />
                <Action
                  tall
                  label={'新しい Web Platform コンポーネン\nトの取得'}
                  icon={
                    <Small>
                      <circle cx="6.500" cy="8" r="5" fill="#8c3c17" stroke="#5c240a" strokeWidth="0.600" />
                      <path d="M6.500 4.500C9 7 8.500 10 6.500 11.500 4.500 10 4 7 6.500 4.500z" fill="#f2b98e" />
                      <path d="M6.500 6V10" stroke="#fff" />
                    </Small>
                  }
                />
                <Rule />
                <Action label="ヘルプ" icon={<HelpBall />} />
              </ul>
            </div>
          </div>
        </section>
      </main>

      {/* Status bar */}
      <footer className="flex h-6 shrink-0 border-t border-[#d5d5d5] bg-[#f0f0f0] py-[1px]">
        <div className="flex-1 border-r border-[#d5d5d5]" />
        <div className="w-[183px] border-r border-[#d5d5d5]" />
        <div className="w-[116px] border-r border-[#d5d5d5]" />
        <div className="w-[2px]" />
      </footer>
    </div>
  );
};

export default App;
